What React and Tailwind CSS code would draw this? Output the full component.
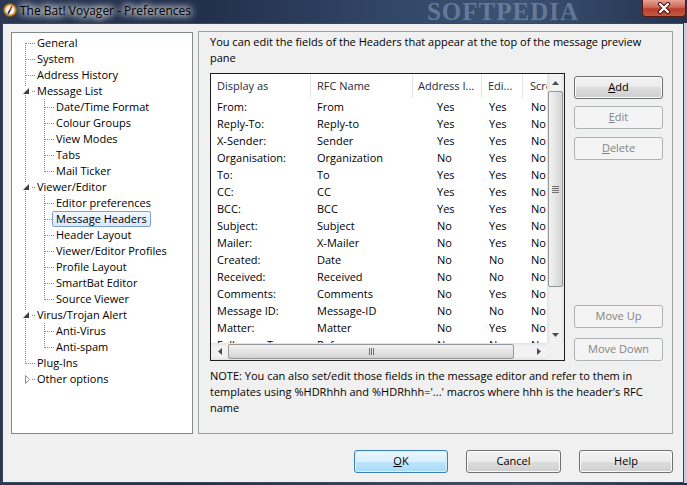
import React from 'react'

const tree = [
  { t: 'General', l: 0, v0: 'bottom' },
  { t: 'System', l: 0 },
  { t: 'Address History', l: 0 },
  { t: 'Message List', l: 0, exp: 'open' },
  { t: 'Date/Time Format', l: 1 },
  { t: 'Colour Groups', l: 1 },
  { t: 'View Modes', l: 1 },
  { t: 'Tabs', l: 1 },
  { t: 'Mail Ticker', l: 1, last: true },
  { t: 'Viewer/Editor', l: 0, exp: 'open' },
  { t: 'Editor preferences', l: 1 },
  { t: 'Message Headers', l: 1, sel: true },
  { t: 'Header Layout', l: 1 },
  { t: 'Viewer/Editor Profiles', l: 1 },
  { t: 'Profile Layout', l: 1 },
  { t: 'SmartBat Editor', l: 1 },
  { t: 'Source Viewer', l: 1, last: true },
  { t: 'Virus/Trojan Alert', l: 0, exp: 'open' },
  { t: 'Anti-Virus', l: 1 },
  { t: 'Anti-spam', l: 1, last: true },
  { t: 'Plug-Ins', l: 0, v0: 'top' },
  { t: 'Other options', l: 0, exp: 'closed', v0: 'none' },
]

const rows = [
  ['From:', 'From', 'Yes', 'Yes', 'No'],
  ['Reply-To:', 'Reply-to', 'Yes', 'Yes', 'No'],
  ['X-Sender:', 'Sender', 'Yes', 'Yes', 'No'],
  ['Organisation:', 'Organization', 'No', 'Yes', 'No'],
  ['To:', 'To', 'Yes', 'Yes', 'No'],
  ['CC:', 'CC', 'Yes', 'Yes', 'No'],
  ['BCC:', 'BCC', 'Yes', 'Yes', 'No'],
  ['Subject:', 'Subject', 'No', 'Yes', 'No'],
  ['Mailer:', 'X-Mailer', 'No', 'Yes', 'No'],
  ['Created:', 'Date', 'No', 'No', 'No'],
  ['Received:', 'Received', 'No', 'No', 'No'],
  ['Comments:', 'Comments', 'No', 'Yes', 'No'],
  ['Message ID:', 'Message-ID', 'No', 'No', 'No'],
  ['Matter:', 'Matter', 'No', 'Yes', 'No'],
  ['Followup-To:', 'References', 'No', 'No', 'No'],
]

const dot = { stroke: '#8a8a8a', strokeWidth: 1, strokeDasharray: '1 1' }

function TreeGuides({ item }) {
  const x0 = 13.5
  const x1 = 32.5
  const w = item.l === 0 ? 21 : 40
  let v0
  if (item.v0 === 'bottom') v0 = <line x1={x0} y1={8} x2={x0} y2={16} {...dot} />
  else if (item.v0 === 'top') v0 = <line x1={x0} y1={0} x2={x0} y2={9} {...dot} />
  else if (item.v0 === 'none') v0 = null
  else if (item.exp) v0 = (
    <>
      <line x1={x0} y1={0} x2={x0} y2={4} {...dot} />
      <line x1={x0} y1={12} x2={x0} y2={16} {...dot} />
    </>
  )
  else v0 = <line x1={x0} y1={0} x2={x0} y2={16} {...dot} />

  return (
    <svg width={w} height={16} className="shrink-0 overflow-visible">
      {v0}
      {item.l === 0 && !item.exp && <line x1={14} y1={8.5} x2={24} y2={8.5} {...dot} />}
      {item.exp && <line x1={20} y1={8.5} x2={24} y2={8.5} {...dot} />}
      {item.exp === 'open' && <polygon points="17,5 17,11 11,11" fill="#3c3c3c" />}
      {item.exp === 'closed' && <polygon points="13.5,4.5 13.5,12.5 17.5,8.5" fill="#fff" stroke="#8f8f8f" />}
      {item.l === 1 && (
        <>
          <line x1={x1} y1={0} x2={x1} y2={item.last ? 9 : 16} {...dot} />
          <line x1={33} y1={8.5} x2={43} y2={8.5} {...dot} />
        </>
      )}
    </svg>
  )
}

function Btn({ children, disabled, focus, className = '' }) {
  const base = 'flex items-center justify-center h-[23px] rounded-[3px] border text-[11px]'
  if (disabled) {
    return (
      <div className={`${base} border-[#adb2b5] bg-[#f4f4f4] text-[#838383] ${className}`}>{children}</div>
    )
  }
  if (focus) {
    return (
      <div className={`${base} border-[#3c7fb1] bg-[linear-gradient(#eaf6fd_0%,#d9f0fc_50%,#bee6fd_50%,#a7d9f5_100%)] shadow-[inset_0_0_0_1px_#d8f0fb] text-black ${className}`}>{children}</div>
    )
  }
  return (
    <div className={`${base} border-[#707070] bg-[linear-gradient(#f2f2f2_0%,#ebebeb_50%,#dddddd_50%,#cfcfcf_100%)] shadow-[inset_0_0_0_1px_#fbfbfb] text-black ${className}`}>{children}</div>
  )
}

function Arrow({ dir }) {
  const pts = {
    up: '0,4 7,4 3.5,0',
    down: '0,0 7,0 3.5,4',
    left: '4,0 4,7 0,3.5',
    right: '0,0 0,7 4,3.5',
  }[dir]
  const vert = dir === 'up' || dir === 'down'
  return (
    <div className="w-[17px] h-[17px] flex items-center justify-center shrink-0">
      <svg width={vert ? 7 : 4} height={vert ? 4 : 7}>
        <polygon points={pts} fill="#4d4d4d" />
      </svg>
    </div>
  )
}

function ListView() {
  const colW = ['w-[100px]', 'w-[102px]', 'w-[69px]', 'w-[41px]', 'w-[60px]']
  const headPad = ['pl-[6px]', 'pl-[6px]', 'pl-[5px]', 'pl-[6px]', 'pl-[7px]']
  const cellPad = ['pl-[6px]', 'pl-[6px]', 'pl-[24px]', 'pl-[7px]', 'pl-[8px]']
  const heads = ['Display as', 'RFC Name', 'Address I...', 'Edi...', 'Scro']
  return (
    <div className="w-[355px] h-[288px] border border-[#1e1e1e] bg-white flex flex-col">
      <div className="flex h-[269px]">
        <div className="w-[336px] overflow-hidden">
          <div className="flex h-[24px] w-[372px]">
            {heads.map((h, i) => (
              <div key={i} className={`${colW[i]} ${headPad[i]} shrink-0 flex items-center border-r border-[#e5e5e5] whitespace-nowrap text-[#1e2a3a]`}>{h}</div>
            ))}
          </div>
          <div className="pt-[1px]">
            {rows.map((r, ri) => (
              <div key={ri} className="flex h-[17px] items-center w-[372px]">
                {r.map((c, i) => (
                  <div key={i} className={`${colW[i]} ${cellPad[i]} shrink-0 whitespace-nowrap`}>{c}</div>
                ))}
              </div>
            ))}
          </div>
        </div>
        <div className="w-[17px] flex flex-col bg-[linear-gradient(90deg,#e3e3e3,#f2f2f2_20%,#f2f2f2_80%,#e3e3e3)]">
          <Arrow dir="up" />
          <div className="mx-[1px] h-[196px] rounded-[2px] border border-[#979797] bg-[linear-gradient(90deg,#f2f2f2,#e4e4e4_50%,#d3d3d3)] flex flex-col items-center justify-center gap-[1px]">
            <div className="w-[7px] h-[1px] bg-[#707070]" />
            <div className="w-[7px] h-[1px] bg-[#707070]" />
            <div className="w-[7px] h-[1px] bg-[#707070]" />
            <div className="w-[7px] h-[1px] bg-[#707070]" />
          </div>
          <div className="flex-1" />
          <Arrow dir="down" />
        </div>
      </div>
      <div className="flex h-[17px]">
        <div className="w-[336px] flex bg-[linear-gradient(#e3e3e3,#f2f2f2_20%,#f2f2f2_80%,#e3e3e3)]">
          <Arrow dir="left" />
          <div className="my-[1px] w-[286px] rounded-[2px] border border-[#979797] bg-[linear-gradient(#f2f2f2,#e4e4e4_50%,#d3d3d3)] flex items-center justify-center gap-[1px]">
            <div className="w-[1px] h-[7px] bg-[#707070]" />
            <div className="w-[1px] h-[7px] bg-[#707070]" />
            <div className="w-[1px] h-[7px] bg-[#707070]" />
          </div>
          <div className="flex-1" />
          <Arrow dir="right" />
        </div>
        <div className="w-[17px] bg-[#f0f0f0]" />
      </div>
    </div>
  )
}

export default function App() {
  return (
    <div className="w-[687px] h-[485px] flex flex-col overflow-hidden bg-[linear-gradient(90deg,#2a3854_0%,#22304d_30%,#34496a_60%,#3c5272_75%,#22324f_100%)] font-['Open_Sans',sans-serif] text-[11px] text-black">
      {/* title bar */}
      <div className="h-[23px] flex items-start shrink-0">
        <svg width="14" height="14" viewBox="0 0 14 14" className="mt-[3px] ml-[3px]">
          <circle cx="7" cy="7" r="6.5" fill="#c9922e" stroke="#7a5514" />
          <circle cx="7" cy="7" r="4.6" fill="#f7f1e3" />
          <line x1="5" y1="11" x2="9" y2="3" stroke="#c0272d" strokeWidth="1.6" />
          <line x1="5" y1="11" x2="7" y2="7" stroke="#1f3a8a" strokeWidth="1.6" />
        </svg>
        <span className="ml-[3px] mt-[3px] text-[12px] leading-4 text-black whitespace-nowrap [text-shadow:0_0_6px_#fff,0_0_8px_#fff,0_0_10px_#fff]">The Bat! Voyager - Preferences</span>
        <span className="ml-[236px] -mt-[3px] text-[25px] leading-[30px] font-bold font-['Liberation_Serif',serif] tracking-[1px] text-[#93a6c2]/50 whitespace-nowrap">SOFTPEDIA</span>
        <div className="ml-auto mr-[1px] w-[44px] h-[17px] rounded-b-[4px] border border-t-0 border-[#5a1a14] bg-[linear-gradient(#e8a193_0%,#d0695a_45%,#bc3d2c_55%,#c35a3f_100%)] flex items-center justify-center">
          <svg width="14" height="12" viewBox="0 0 14 12">
            <path d="M3 2 L11 10 M11 2 L3 10" stroke="#3a0a05" strokeWidth="4.2" strokeLinecap="round" />
            <path d="M3 2 L11 10 M11 2 L3 10" stroke="#fff" strokeWidth="2.4" strokeLinecap="round" />
          </svg>
        </div>
      </div>
      {/* frame + client */}
      <div className="flex-1 flex pl-[2px] pb-[2px]">
        <div className="flex-1 border border-[#3a475e] bg-[#f0f0f0] flex flex-col">
          <div className="flex mt-[8px] ml-[8px] gap-[5px]">
            {/* tree */}
            <div className="w-[182px] h-[402px] border border-[#828790] bg-white pt-[2px]">
              {tree.map((it, i) => (
                <div key={i} className="flex h-4 items-center">
                  <TreeGuides item={it} />
                  <span
                    className={`h-4 flex items-center px-[3px] border rounded-[2px] whitespace-nowrap ${
                      it.sel
                        ? 'border-[#7da2ce] bg-[linear-gradient(#f2f8fe,#d6e8fb)]'
                        : 'border-transparent'
                    }`}
                  >
                    {it.t}
                  </span>
                </div>
              ))}
            </div>
            {/* right panel */}
            <div className="w-[475px] h-[403px] -mt-[1px] border border-[#a0a0a0] flex flex-col pl-[11px] pt-[2px]">
              <div className="leading-4 whitespace-nowrap">
                You can edit the fields of the Headers that appear at the top of the message preview
                <br />
                pane
              </div>
              <div className="flex mt-[7px] gap-[9px]">
                <ListView />
                <div className="w-[89px] h-[288px] flex flex-col justify-between pt-[3px]">
                  <div className="flex flex-col">
                    <Btn><span><span className="underline">A</span>dd</span></Btn>
                    <Btn disabled className="mt-[7px]"><span><span className="underline">E</span>dit</span></Btn>
                    <Btn disabled className="mt-[8px]"><span><span className="underline">D</span>elete</span></Btn>
                  </div>
                  <div className="flex flex-col">
                    <Btn disabled>Move Up</Btn>
                    <Btn disabled className="mt-[10px]">Move Down</Btn>
                  </div>
                </div>
              </div>
              <div className="mt-[7px] leading-4 whitespace-nowrap">
                NOTE: You can also set/edit those fields in the message editor and refer to them in
                <br />
                templates using %HDRhhh and %HDRhhh='...' macros where hhh is the header's RFC
                <br />
                name
              </div>
            </div>
          </div>
          <div className="flex justify-end gap-[18px] mt-[16px] mr-[10px]">
            <Btn focus className="w-[94px]"><span><span className="underline">O</span>K</span></Btn>
            <Btn className="w-[95px]">Cancel</Btn>
            <Btn className="w-[94px]">Help</Btn>
          </div>
        </div>
        <div className="w-[3px] bg-[#c3cedc]" />
      </div>
    </div>
  )
}
